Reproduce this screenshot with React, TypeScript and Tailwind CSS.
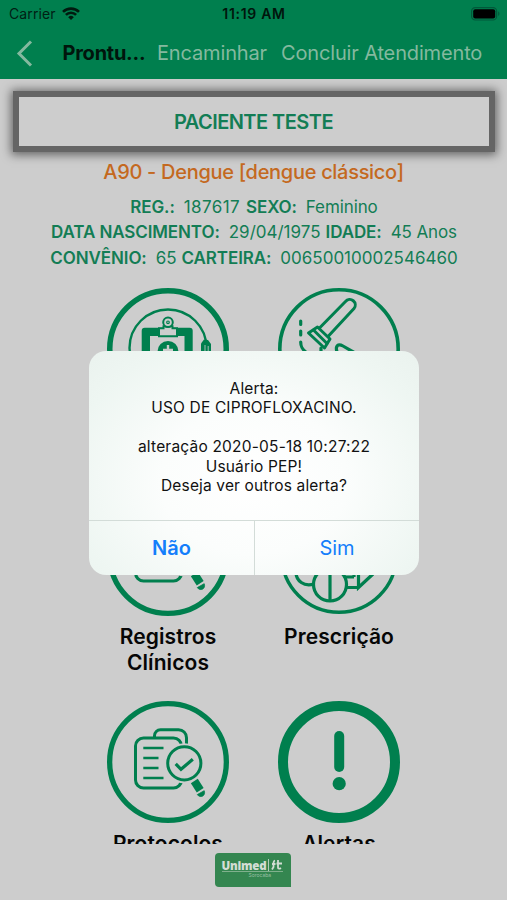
import React from "react";

const GREEN = '#007f4e'
const PAPER = '#cdcdcd'

const WifiIcon = () => (
  <svg className="ml-[6px]" width="18" height="13" viewBox="0 0 18 13" fill="none" stroke="#001a0f" strokeWidth="2.6">
    <path d="M1 4.9a11.3 11.3 0 0 1 16 0"/>
    <path d="M3.9 7.9a7.2 7.2 0 0 1 10.2 0"/>
    <path d="M9 13 6.2 10.2a4 4 0 0 1 5.6 0Z" fill="#001a0f" stroke="none"/>
  </svg>
)

const StatusBar = () => (
  <div className="flex h-[27px] items-center pl-[9px] pr-[8px] text-[14px] text-[#002014]">
    <div className="flex flex-1 items-center">
      <span className="tracking-[0.1px]">Carrier</span>
      <WifiIcon/>
    </div>
    <span className="font-semibold tracking-[0.7px] text-[#00150c]">11:19 AM</span>
    <div className="flex flex-1 justify-end">
      <svg className="-mr-[2px]" width="30" height="14" viewBox="0 0 30 14">
        <rect x="0.6" y="0.6" width="25" height="12.4" rx="3.6" fill="none" stroke="#00593a" strokeWidth="1.2"/>
        <rect x="2.2" y="2.2" width="22" height="9.2" rx="2" fill="#000"/>
        <path d="M27.2 4.6c1.6.6 1.6 3.8 0 4.4Z" fill="#00593a"/>
      </svg>
    </div>
  </div>
)

const NavBar = () => (
  <div className="flex h-[52px] items-center pl-4 text-[20px] tracking-[-0.15px] whitespace-nowrap text-[#84b99f]">
    <svg width="17" height="27" viewBox="0 0 17 27" fill="none" stroke="#84b99f" strokeWidth="3">
      <path d="M15 1.5 3 13.5l12 12"/>
    </svg>
    <span className="ml-[29.5px] w-[94.5px] font-bold tracking-[-0.25px] text-[#00150c]">Prontu...</span>
    <span className="w-[124px]">Encaminhar</span>
    <span>Concluir Atendimento</span>
  </div>
)

const Field = ({label, value, className}: {
  label: string
  value: string
  className?: string
}) => (
  <div className="flex gap-[9px]">
    <b className="font-semibold tracking-[-0.1px]">{label}</b>
    <span className={className}>{value}</span>
  </div>
)

const PatientInfo = () => (
  <div className="flex flex-col items-center whitespace-nowrap text-[#137d55]">
    <div
      className="mt-3 flex h-[61px] w-[482px] items-center justify-center border-[6px] border-[#656565] text-[20px] font-semibold tracking-[-0.55px] shadow-[0_1px_9px_2px_rgba(0,0,0,0.5)]">
      PACIENTE TESTE
    </div>
    <div className="mt-[7px] text-[20px] leading-[26px] font-medium tracking-[-0.3px] text-[#c4691f]">
      A90 - Dengue [dengue clássico]
    </div>
    <div className="mt-[9.5px] ml-[1px] flex flex-col items-center text-[17px] leading-[25.6px]">
      <div className="flex gap-[6px]">
        <Field label="REG.:" value="187617" className="tracking-[0.4px]"/>
        <Field label="SEXO:" value="Feminino" className="tracking-[-0.1px]"/>
      </div>
      <div className="flex gap-[5px]">
        <Field label="DATA NASCIMENTO:" value="29/04/1975"/>
        <Field label="IDADE:" value="45 Anos" className="tracking-[-0.1px]"/>
      </div>
      <div className="flex gap-[5px]">
        <Field label="CONVÊNIO:" value="65"/>
        <Field label="CARTEIRA:" value="00650010002546460"/>
      </div>
    </div>
  </div>
)

const Round = ({ring, size = 122, children}: {
  ring: number
  size?: number
  children: React.ReactNode
}) => (
  <svg width="122" height="122" viewBox="0 0 122 122" fill="none" stroke={GREEN}>
    <circle cx="61" cy="61" r={(size - ring) / 2} strokeWidth={ring}/>
    {children}
  </svg>
)

const ClipboardIcon = () => (
  <Round ring={5.5}>
    <circle cx="61" cy="60" r="38.5" strokeWidth="2.4"/>
    <path d="M94 64v-8.5l3-4 4 .5 3 4V64Z" fill={GREEN} stroke="none"/>
    <path d="M98 57v6M101.2 58v5" stroke={PAPER} strokeWidth="0.8"/>
    <rect x="34.7" y="39.7" width="51" height="56" rx="3" fill={GREEN} stroke="none"/>
    <rect x="43" y="48" width="34.5" height="40" fill={PAPER} stroke="none"/>
    <path d="M52 48.3v-8h4.5v-2h9v2H70v8Z" fill={PAPER} strokeWidth="2"/>
    <circle cx="61" cy="34.3" r="4.8" fill={PAPER} strokeWidth="2"/>
    <circle cx="61" cy="34.3" r="1.3" strokeWidth="1.2"/>
    <circle cx="61" cy="63.5" r="10.5" fill={GREEN} stroke="none"/>
    <path d="M61 57v10M56 62h10" stroke={PAPER} strokeWidth="2.4"/>
  </Round>
)

const HammerIcon = () => (
  <Round ring={3.6}>
    <g strokeWidth="3" strokeLinecap="round" strokeLinejoin="round">
      <path d="M41.5 40 67.5 13.5a5.3 5.3 0 0 1 8.500 7L50.5 48"/>
      <path d="m39.500 39 12.500 12-5.500 9L30.5 45Z"/>
      <path d="m35.500 42 13.500 13.500"/>
      <path d="M22.7 33v3.5M22.7 43v4M22.7 54c0 5 1.5 7 5 10" strokeWidth="3.2"/>
      <path d="M43 60v5M59 64c-2-6 1-9 6-6l12 7" strokeWidth="3.2"/>
    </g>
  </Round>
)

const RecordsIcon = () => (
  <Round ring={5.3}>
    <g strokeWidth="3">
      <path d="M47.5 36v-1.3a6 6 0 0 1 6-6H71.5a8 8 0 0 1 8 8V46"/>
      <rect x="28.5" y="37" width="46" height="50" rx="8"/>
      <circle cx="77.3" cy="62.3" r="20" fill={PAPER} stroke="none"/>
      <circle cx="77.3" cy="62.3" r="16.6"/>
      <path d="M36.3 47H56.5M36.3 57H51.5M36.3 67H51.5M36.3 77H56.5" strokeWidth="2.6"/>
      <path d="m68.7 62.8 5.3 5.5 11.8-10" strokeWidth="3.2"/>
    </g>
    <path d="m87.3 80 5.9 9.2" strokeWidth="8.2"/>
    <path d="M90.3 93.6c1.5 2.3 4 2.4 5.6 1.3 1.7-1.1 2.1-3 1.3-5.2Z" fill={GREEN} strokeWidth="0.8"/>
  </Round>
)

const PillsIcon = () => (
  <Round ring={3.4} size={118}>
    <g strokeWidth="3.2">
      <path d="M18 78c0 9 8 15 18 12"/>
      <circle cx="52" cy="90.5" r="16.5"/>
      <path d="M52 76v31M67 83h9M68 93.5h12.5M80.5 78v15.5L95 80M76 83V76"/>
    </g>
  </Round>
)

const AlertIcon = () => (
  <Round ring={10}>
    <path d="M61.2 35v31" strokeWidth="10" strokeLinecap="round"/>
    <circle cx="61.2" cy="82.7" r="6.6" fill={GREEN} stroke="none"/>
  </Round>
)

const items = [
  {title: 'Sumário', icon: <ClipboardIcon/>},
  {title: 'Exames', icon: <HammerIcon/>},
  {title: 'Registros Clínicos', icon: <RecordsIcon/>},
  {title: 'Prescrição', icon: <PillsIcon/>},
  {title: 'Protocolos', icon: <RecordsIcon/>},
  {title: 'Alertas', icon: <AlertIcon/>},
]

const Menu = () => (
  <div className="mx-auto mt-[16.5px] grid w-[342px] grid-cols-2">
    {items.map(({title, icon}) => (
      <div key={title} className="flex h-[206.5px] flex-col items-center">
        {icon}
        <div
          className="mt-2 w-[130px] text-center text-[21px] leading-[26px] font-semibold tracking-[0.1px] text-[#060606]">{title}</div>
      </div>
    ))}
  </div>
)

const Footer = () => (
  <div className="flex h-[56px] justify-center pt-[9px] pr-[2px]">
    <div
      className="flex h-[34px] w-[76px] flex-col rounded-[4px] rounded-br-none bg-[#348650] pt-[6px] pr-[8px] pl-[7px] text-[#d3ddd4]">
      <div className="flex h-[13px] items-center justify-between border-b border-[#80b08d]">
        <span
          className="font-['Open_Sans',sans-serif] text-[11.5px] leading-[13px] font-extrabold tracking-[-0.2px]">Unimed</span>
        <svg width="15" height="12" viewBox="0 0 15 12" fill="none" stroke="#d3ddd4" strokeWidth="1.8">
          <path d="M.5 0v12" strokeWidth="0.8"/>
          <path d="M7 1.5C5 2 5.5 4 5.5 6V8L4 10.5M4 5h3.5M10 1v7.5c0 1.5 1.5 1.5 3 .5M8.5 4.5H14"/>
        </svg>
      </div>
      <span className="ml-[27px] text-[5px] leading-[7px] text-[#9bc0a4]">Sorocaba</span>
    </div>
  </div>
)

const AlertDialog = () => (
  <div
    className="absolute top-[351px] left-[89px] flex h-[224px] w-[330px] flex-col overflow-hidden rounded-[17px] bg-[#edf6f2] bg-[radial-gradient(ellipse_at_50%_58%,#ffffff_0%,#fbfdfc_40%,#eef6f2_80%,#eaf2ee_100%)] text-[#111]">
    <div className="flex h-[169px] flex-col items-center pt-[27.5px] text-[15.5px] leading-[19.5px] tracking-[0.15px]">
      <span>Alerta:</span>
      <span>USO DE CIPROFLOXACINO.</span>
      <span className="mt-[19.5px] tracking-[0.2px]">alteração 2020-05-18 10:27:22</span>
      <span>Usuário PEP!</span>
      <span>Deseja ver outros alerta?</span>
    </div>
    <div className="flex flex-1 border-t border-[#d3dcd8] text-[20px] text-[#147efb]">
      <button className="w-[166px] border-r border-[#d3dcd8] font-semibold">Não</button>
      <button className="flex-1">Sim</button>
    </div>
  </div>
)

export default function App() {
  return (
    <div className="relative h-[900px] w-[507px] overflow-hidden bg-[#cdcdcd] font-['Inter',sans-serif]">
      <div className="h-[79px] bg-[#007f4e]">
        <StatusBar/>
        <NavBar/>
      </div>
      <div className="h-[765px] overflow-hidden">
        <PatientInfo/>
        <Menu/>
      </div>
      <Footer/>
      <AlertDialog/>
    </div>
  )
}
